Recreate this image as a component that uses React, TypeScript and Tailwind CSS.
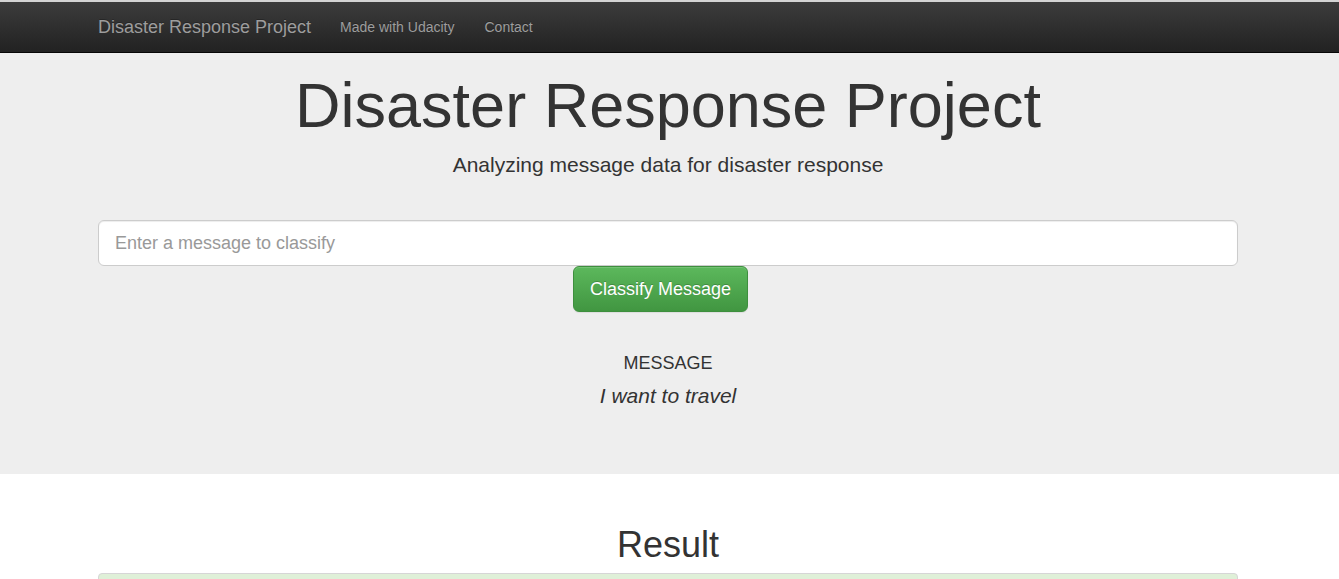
const App = () => {
  return (
    <div className="min-h-screen bg-white text-[#333] font-['Liberation_Sans',Arial,sans-serif]">
      {/* navbar */}
      <div className="border-t-2 border-b border-t-[#d4d4d4] border-b-[#080808] bg-gradient-to-b from-[#3c3c3c] to-[#222]">
        <div className="mx-auto flex h-[50px] w-[1173px] items-center pl-[15px] pr-[18px]">
          <a className="text-[18px] leading-[20px] text-[#9d9d9d] [text-shadow:0_-1px_0_rgba(0,0,0,0.25)]">
            Disaster Response Project
          </a>
          <a className="ml-[29px] text-[14px] leading-[20px] text-[#9d9d9d] [text-shadow:0_-1px_0_rgba(0,0,0,0.25)]">
            Made with Udacity
          </a>
          <a className="ml-[30px] text-[14px] leading-[20px] text-[#9d9d9d] [text-shadow:0_-1px_0_rgba(0,0,0,0.25)]">
            Contact
          </a>
        </div>
      </div>

      {/* jumbotron */}
      <div className="bg-[#eee] pt-[18px] pb-[67px]">
        <div className="mx-auto flex w-[1173px] flex-col pl-[15px] pr-[18px]">
          <h1 className="text-center text-[63px] leading-[69px] text-[#333]">Disaster Response Project</h1>
          <p className="mt-[10px] text-center text-[21px] leading-[30px] text-[#333]">
            Analyzing message data for disaster response
          </p>

          <input
            className="mt-[40px] h-[46px] w-full rounded-[6px] border border-[#ccc] bg-white px-[16px] text-[18px] text-[#555] shadow-[inset_0_1px_1px_rgba(0,0,0,0.075)] outline-none placeholder:text-[#999]"
            placeholder="Enter a message to classify"
          />
          <div>
            <button className="ml-[475px] h-[46px] rounded-[6px] border border-[#3e8f3e] bg-gradient-to-b from-[#5cb85c] to-[#419641] px-[16px] text-[18px] leading-[24px] text-white shadow-[inset_0_1px_0_rgba(255,255,255,0.15),0_1px_1px_rgba(0,0,0,0.075)] [text-shadow:0_-1px_0_rgba(0,0,0,0.2)]">
              Classify Message
            </button>
          </div>

          <div className="mt-[41px] text-center text-[18px] leading-[20px]">MESSAGE</div>
          <div className="mt-[12px] text-center text-[21px] italic leading-[22px]">I want to travel</div>
        </div>
      </div>

      {/* results */}
      <div className="mx-auto w-[1173px] pl-[15px] pr-[18px]">
        <h1 className="mt-[51px] text-center text-[36px] leading-[40px] text-[#333]">Result</h1>
        <div className="mt-[8px] h-[40px] rounded-t-[4px] border border-[#d6d6d6] bg-[#dff0d8]"></div>
      </div>
    </div>
  )
}

export default App
